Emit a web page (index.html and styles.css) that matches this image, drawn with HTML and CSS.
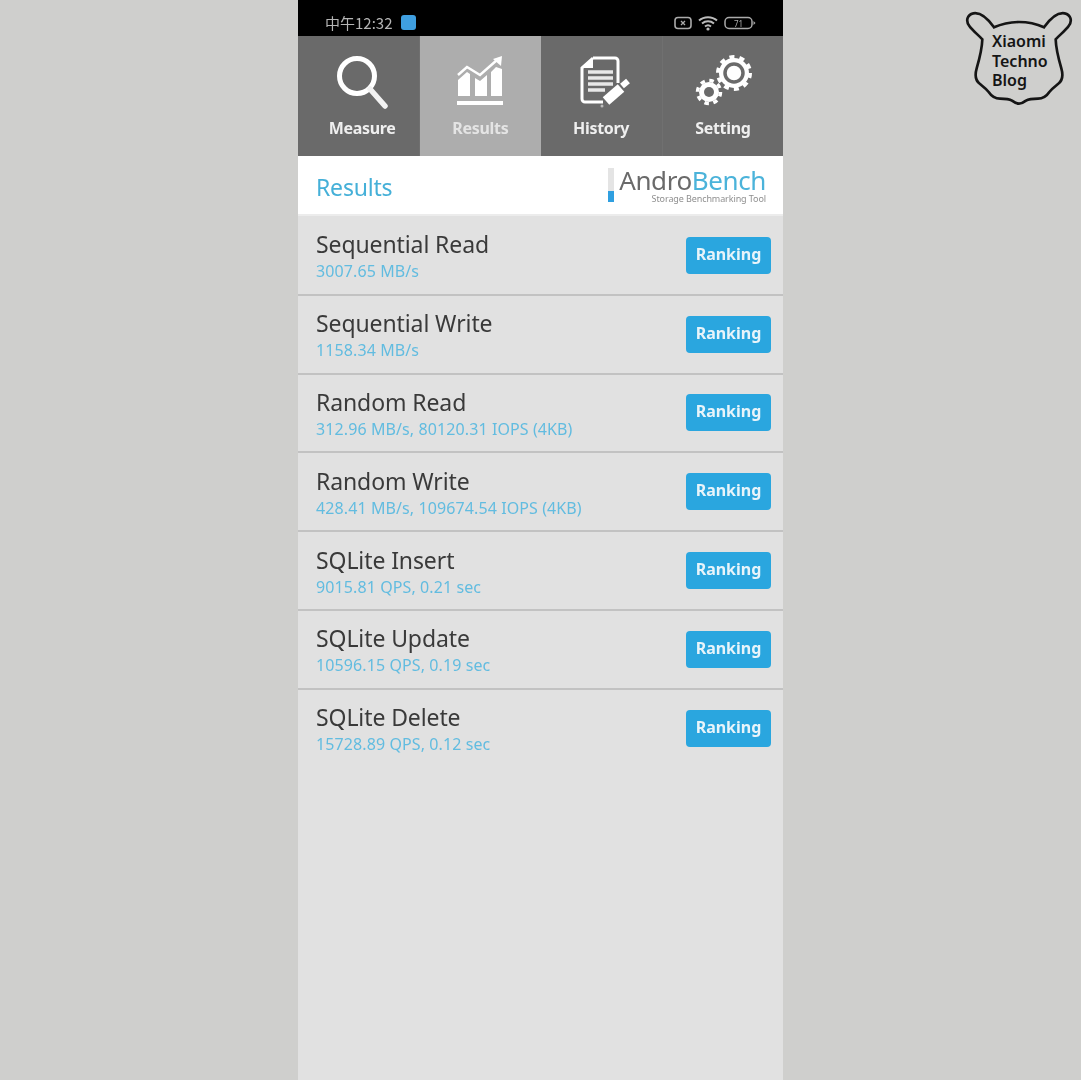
FILE: index.html
```html
<!DOCTYPE html>
<html lang="en">
<head>
<meta charset="utf-8">
<title>AndroBench Results</title>
<link rel="stylesheet" href="styles.css">
</head>
<body>
<main class="phone">
  <div class="status">
    <div class="status-left">
      <span class="clock">中午12:32</span>
      <span class="app-dot"></span>
    </div>
    <div class="status-right">
      <svg class="st-sim" viewBox="0 0 18 14"><rect x="1" y="1.5" width="16" height="11" rx="3" fill="none" stroke="#aaa" stroke-width="1.6"/><path d="M7 5l4 4M11 5l-4 4" stroke="#aaa" stroke-width="1.3"/></svg>
      <svg class="st-wifi" viewBox="0 0 20 16"><path d="M1 5.5C6 1 14 1 19 5.5M4 8.5c3.500-3 8.500-3 12 0M7 11.500c1.800-1.500 4.200-1.500 6 0" fill="none" stroke="#bbb" stroke-width="2"/><circle cx="10" cy="14" r="1.600" fill="#bbb"/></svg>
      <svg class="st-batt" viewBox="0 0 32 14"><rect x="1" y="1.500" width="27" height="11" rx="4" fill="none" stroke="#aaa" stroke-width="1.500"/><path d="M29.500 5v4l2-2z" fill="#aaa"/><text x="14.500" y="10.500" text-anchor="middle" class="batt-num">71</text></svg>
    </div>
  </div>

  <nav class="tabs">
    <div class="tab tab-first">
      <svg class="tab-icon" viewBox="0 0 60 60"><circle cx="25" cy="23" r="17.500" fill="none" stroke="#fff" stroke-width="5"/><path d="M38 36l15 17" stroke="#f2f2f2" stroke-width="5.500" stroke-linecap="round"/></svg>
      <span class="tab-label">Measure</span>
    </div>
    <div class="tab tab-active">
      <svg class="tab-icon" viewBox="0 0 60 60"><path d="M8 43V27l9-8 3 2v22zM25 43V25l5 3 7-6v21zM41 43V19l5-5 6 2v27z" fill="#fff"/><path d="M8 22l9-8 13 8L47 7" fill="none" stroke="#fff" stroke-width="2.500"/><path d="M43 6l9-3-1 10z" fill="#fff"/><rect x="7" y="48" width="46" height="4" fill="#fff"/></svg>
      <span class="tab-label">Results</span>
    </div>
    <div class="tab">
      <svg class="tab-icon" viewBox="0 0 60 60"><path d="M22 5H44a3 3 0 0 1 3 3V30M32 49H14a3 3 0 0 1-3-3V15L22 5" fill="none" stroke="#fff" stroke-width="3"/><path d="M22 5L11 15h11z" fill="#fff"/><path d="M17 19h25M17 25h25M17 31h25M17 37h17" stroke="#e8e8e8" stroke-width="3.500"/><path d="M35 48l15-13" stroke="#fff" stroke-width="10"/><path d="M51 33l6-5" stroke="#fff" stroke-width="6"/><circle cx="31" cy="53" r="1.500" fill="#bbb"/></svg>
      <span class="tab-label">History</span>
    </div>
    <div class="tab">
      <svg class="tab-icon" viewBox="0 0 60 60">
        <circle class="gear-body" cx="41" cy="20" r="15"/>
        <circle class="gear-teeth" cx="41" cy="20" r="16" stroke-width="4" stroke-dasharray="5 5.050"/>
        <circle class="gear-gap" cx="41" cy="20" r="9" stroke-width="3.500"/>
        <circle class="gear-body" cx="16" cy="39" r="10"/>
        <circle class="gear-teeth" cx="16" cy="39" r="11.500" stroke-width="3.500" stroke-dasharray="4.500 4.530"/>
        <circle class="gear-hole" cx="16" cy="39" r="5"/>
      </svg>
      <span class="tab-label">Setting</span>
    </div>
  </nav>

  <header class="title-bar">
    <h1 class="title">Results</h1>
    <div class="brand">
      <div class="brand-mark"><span class="brand-fill"></span></div>
      <div class="brand-text">
        <div class="brand-name">Andro<span class="brand-accent">Bench</span></div>
        <div class="brand-tag">Storage Benchmarking Tool</div>
      </div>
    </div>
  </header>

  <section class="list">
    <article class="row">
      <div class="row-text"><div class="row-name">Sequential Read</div><div class="row-value">3007.65 MB/s</div></div>
      <button class="rank">Ranking</button>
    </article>
    <article class="row">
      <div class="row-text"><div class="row-name">Sequential Write</div><div class="row-value">1158.34 MB/s</div></div>
      <button class="rank">Ranking</button>
    </article>
    <article class="row">
      <div class="row-text"><div class="row-name">Random Read</div><div class="row-value">312.96 MB/s, 80120.31 IOPS (4KB)</div></div>
      <button class="rank">Ranking</button>
    </article>
    <article class="row">
      <div class="row-text"><div class="row-name">Random Write</div><div class="row-value">428.41 MB/s, 109674.54 IOPS (4KB)</div></div>
      <button class="rank">Ranking</button>
    </article>
    <article class="row">
      <div class="row-text"><div class="row-name">SQLite Insert</div><div class="row-value">9015.81 QPS, 0.21 sec</div></div>
      <button class="rank">Ranking</button>
    </article>
    <article class="row">
      <div class="row-text"><div class="row-name">SQLite Update</div><div class="row-value">10596.15 QPS, 0.19 sec</div></div>
      <button class="rank">Ranking</button>
    </article>
    <article class="row row-last">
      <div class="row-text"><div class="row-name">SQLite Delete</div><div class="row-value">15728.89 QPS, 0.12 sec</div></div>
      <button class="rank">Ranking</button>
    </article>
  </section>
</main>

<aside class="logo">
  <svg class="logo-shape" viewBox="0 0 393 345"><path d="M132 82C115 58 92 36 70 40C52 44 46 62 58 78C68 92 84 104 97 118C96 150 88 178 80 205C74 226 76 242 90 252C100 260 108 266 116 276C124 288 134 296 150 296C164 296 176 296 186 302C194 308 200 311 207 311C214 311 220 308 228 302C238 296 250 296 264 296C280 296 290 288 298 276C306 266 314 260 324 252C338 242 340 226 334 205C326 178 318 150 317 118C330 104 346 92 356 78C368 62 362 44 344 40C322 36 299 58 282 82C260 72 234 66 207 66C180 66 154 72 132 82Z" fill="none" stroke="#151515" stroke-width="8"/></svg>
  <div class="logo-text">Xiaomi<br>Techno<br>Blog</div>
</aside>
</body>
</html>
```

FILE: styles.css
```css
* { box-sizing: border-box; margin: 0; padding: 0; }

html, body { height: 100%; }

body {
  height: 1080px;
  overflow: hidden;
  background: #cfcfcd;
  display: flex;
  justify-content: center;
  font-family: "Noto Sans", "Liberation Sans", sans-serif;
  position: relative;
}

.phone {
  width: 485px;
  height: 1080px;
  background: #e1e1e1;
  display: flex;
  flex-direction: column;
}

.status {
  height: 36px;
  flex: none;
  background: #000;
  display: flex;
  justify-content: space-between;
  align-items: center;
  padding: 9px 27px 0 27px;
}

.status-left, .status-right { display: flex; align-items: center; filter: blur(0.5px); }
.status-left { gap: 9px; }
.status-right { gap: 6px; }

.clock {
  color: #b5b5b5;
  font-size: 15px;
  line-height: 18px;
  font-family: "Noto Sans CJK SC", "Noto Sans", sans-serif;
}

.app-dot {
  width: 15px;
  height: 15px;
  border-radius: 3px;
  background: #3f9fe0;
}

.st-sim { width: 18px; height: 14px; }
.st-wifi { width: 20px; height: 16px; }
.st-batt { width: 32px; height: 14px; }
.batt-num { font-size: 8px; fill: #aaa; font-family: "Noto Sans", sans-serif; }

.tabs {
  height: 120px;
  flex: none;
  display: grid;
  grid-template-columns: repeat(4, 1fr);
  background: #6a6a6a;
}

.tab {
  display: flex;
  flex-direction: column;
  align-items: center;
  padding-top: 17px;
  gap: 3px;
}

.tab-first { padding-left: 7px; }
.tab + .tab { border-left: 1px solid #707070; }
.tab-active { background: #adadad; border-left: none; }
.tab-active + .tab { border-left: none; }

.tab-icon { width: 60px; height: 60px; filter: blur(0.7px); }

.gear-body { fill: #fff; }
.gear-teeth { fill: none; stroke: #fff; }
.gear-gap { fill: none; stroke: #6a6a6a; }
.gear-hole { fill: #6a6a6a; }

.tab-label {
  color: #efefef;
  font-size: 16px;
  font-weight: 700;
  line-height: 24px;
  letter-spacing: -0.3px;
  filter: blur(0.6px);
}

.tab-active .tab-label { color: #e4e4e4; }

.title-bar {
  height: 60px;
  flex: none;
  background: #fff;
  border-bottom: 2px solid #ececec;
  display: flex;
  justify-content: space-between;
  align-items: center;
  padding: 0 17px 0 18px;
}

.title {
  color: #45b0d8;
  font-size: 23px;
  font-weight: 400;
  letter-spacing: -0.2px;
  margin-top: 3px;
  filter: blur(0.5px);
}

.brand { display: flex; gap: 5px; align-items: flex-start; }

.brand-mark {
  width: 6px;
  height: 34px;
  background: #e4e4e4;
  display: flex;
  align-items: flex-end;
  margin-top: 1px;
}

.brand-fill { width: 100%; height: 11px; background: #2f9fe0; }

.brand-text { display: flex; flex-direction: column; align-items: flex-end; }

.brand-name {
  color: #6a6a6a;
  font-size: 26px;
  line-height: 27px;
  letter-spacing: -0.4px;
  filter: blur(0.5px);
}

.brand-accent { color: #4bb3da; }

.brand-tag {
  color: #8f8f8f;
  font-size: 9px;
  line-height: 10px;
  letter-spacing: -0.1px;
  filter: blur(0.6px);
}

.list { display: flex; flex-direction: column; padding-top: 1px; }

.row {
  height: 78.8px;
  flex: none;
  border-bottom: 2px solid #c2c2c2;
  display: flex;
  align-items: center;
  justify-content: space-between;
  padding: 0 12px 0 18px;
}

.row-last { border-bottom-color: transparent; }

.row-text { display: flex; flex-direction: column; padding-top: 4px; }

.row-name {
  color: #3a3a3a;
  font-size: 23px;
  line-height: 28px;
  letter-spacing: -0.1px;
  filter: blur(0.6px);
}

.row-value {
  color: #62bce0;
  font-size: 16px;
  line-height: 26px;
  letter-spacing: 0.1px;
  filter: blur(0.7px);
}

.rank {
  width: 85px;
  height: 37px;
  border: none;
  border-radius: 4px;
  background: #2aa6df;
  color: #e8f4fa;
  font-family: inherit;
  font-size: 16px;
  font-weight: 700;
  padding-bottom: 3px;
  filter: blur(0.5px);
}

.logo {
  position: absolute;
  left: 950px;
  top: 0;
  width: 131px;
  height: 115px;
}

.logo-shape { width: 131px; height: 115px; display: block; }

.logo-text {
  position: absolute;
  left: 42px;
  top: 32px;
  color: #151515;
  font-size: 16px;
  font-weight: 600;
  line-height: 19.500px;
}
```
